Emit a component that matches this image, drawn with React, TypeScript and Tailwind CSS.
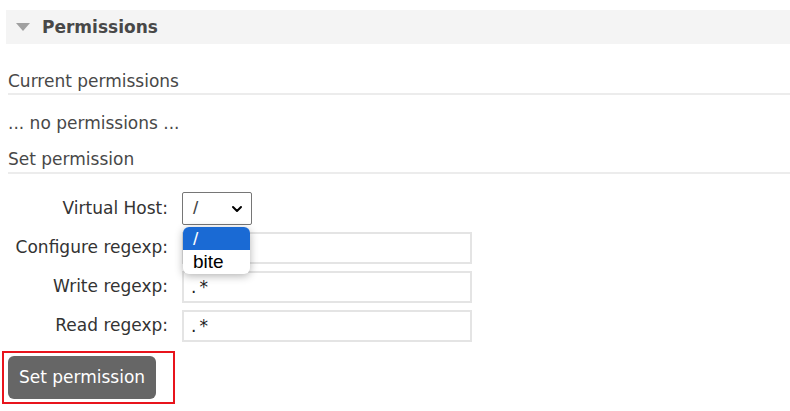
import { ChevronDown } from 'lucide-react';

const rows = [
  { label: 'Configure regexp:', value: '' },
  { label: 'Write regexp:', value: '.*' },
  { label: 'Read regexp:', value: '.*' },
];

export default function App() {
  return (
    <div className="w-[790px] h-[411px] bg-white pl-[6px] pt-[10px] font-['DejaVu_Sans',sans-serif] text-[#333] relative overflow-hidden">
      {/* section header */}
      <div className="h-[34px] bg-[#f4f4f4] flex items-center">
        <div className="ml-[10px] w-0 h-0 border-l-[7px] border-r-[7px] border-t-[8px] border-l-transparent border-r-transparent border-t-[#a0a0a0]" />
        <h2 className="ml-[12px] text-[17px] font-bold text-[#484848] leading-none">Permissions</h2>
      </div>

      <div className="pl-[2px]">
        <h3 className="mt-[27px] text-[17px] text-[#484848] leading-[20px] pb-[2px] border-b-2 border-[#ececec]">
          Current permissions
        </h3>
        <p className="mt-[18px] text-[17px] text-[#484848] leading-[20px]">... no permissions ...</p>
        <h3 className="mt-[16px] text-[17px] text-[#484848] leading-[20px] pb-[3px] border-b-2 border-[#ececec]">
          Set permission
        </h3>
      </div>

      <div className="mt-[18px] flex flex-col gap-[7px]">
        <div className="grid grid-cols-[176px_auto] items-center h-[33px]">
          <label className="text-right pr-[14px] text-[17px] text-[#333]">Virtual Host:</label>
          <div className="relative">
            <div className="w-[70px] h-[33px] border border-[#767676] rounded-[2px] flex items-center justify-between pl-[10px] pr-[6px] font-['Liberation_Sans',sans-serif] text-[19px] text-[#444] bg-white">
              <span>/</span>
              <ChevronDown size={16} strokeWidth={3} className="text-black" />
            </div>
            {/* open option list */}
            <div className="absolute left-[1px] top-[35px] w-[67px] z-10 bg-white rounded-[6px] shadow-[0_2px_8px_rgba(0,0,0,0.3)] overflow-hidden font-['Liberation_Sans',sans-serif] text-[19px] leading-[23px]">
              <div className="bg-[#1a6ad4] text-white pl-[10px] h-[23px]">/</div>
              <div className="text-black pl-[10px] h-[24px]">bite</div>
            </div>
          </div>
        </div>
        {rows.map((r) => (
          <div key={r.label} className="grid grid-cols-[176px_auto] items-center h-[32px]">
            <label className="text-right pr-[14px] text-[17px] text-[#333]">{r.label}</label>
            <input
              defaultValue={r.value}
              className="w-[290px] h-[32px] border-2 border-[#e4e4e4] px-[7px] text-[17px] text-[#222] font-['DejaVu_Sans',sans-serif] tracking-[3px] outline-none"
            />
          </div>
        ))}
      </div>

      <div className="mt-[9px] -ml-[4px] inline-block border-2 border-[#e8141c] pl-[4px] pr-[17px] py-[3px]">
        <button className="w-[148px] h-[43px] bg-[#666] rounded-[6px] text-white text-[17px] font-['DejaVu_Sans',sans-serif]">
          Set permission
        </button>
      </div>
    </div>
  );
}
